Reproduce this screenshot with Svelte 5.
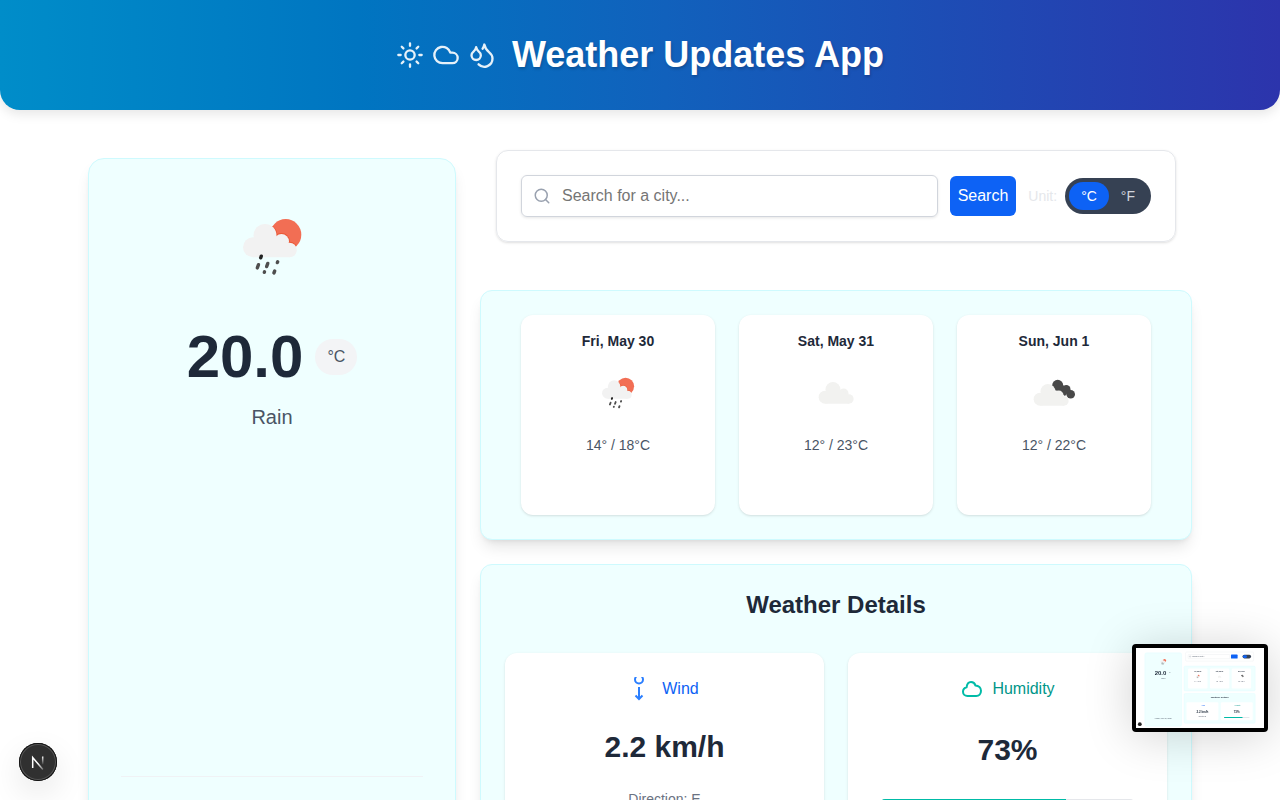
<script>
  let unit = $state('C');
  let city = $state('');
  const humidity = 73;
  const days = [
    { date: 'Fri, May 30', low: 14, high: 18, icon: 'rain' },
    { date: 'Sat, May 31', low: 12, high: 23, icon: 'cloud' },
    { date: 'Sun, Jun 1', low: 12, high: 22, icon: 'broken' }
  ];
</script>

{#snippet cloudShape()}
  <circle cx="11" cy="30.3" r="10" />
  <circle cx="23" cy="18.5" r="11.5" />
  <circle cx="39.5" cy="24.5" r="7.5" />
  <circle cx="47.5" cy="33" r="7.3" />
  <path d="M11 22h28l8.500 5v13.300H11z" />
{/snippet}

{#snippet rainArt()}
  <circle cx="43.700" cy="17.700" r="15.600" fill="#f26e54" />
  <g fill="#ea5836">
    <circle cx="23" cy="18.500" r="12.300" clip-path="url(#sun-disc)" />
    <circle cx="39.500" cy="24.500" r="8.500" />
    <circle cx="47.500" cy="33" r="8.300" clip-path="url(#sun-disc)" />
  </g>
  <g fill="#f2f2f2">{@render cloudShape()}</g>
  <g stroke="#4e4e4e" stroke-width="3.400" stroke-linecap="round">
    <path d="M19.300 39.200l-.6 1.600" stroke="#222" />
    <path d="M16.500 47.700l-1.200 3.200M25.800 46.400l-1.200 3.200M22.500 54.800l-.2.500M32.700 54l-.8 2M35.700 44.700l-.4.900" />
  </g>
{/snippet}

{#snippet thumbText(x, y, size, text, weight = 400, fill = '#4a5565')}
  <text {x} {y} font-size={size} font-weight={weight} {fill} text-anchor="middle">{text}</text>
{/snippet}

<header class="hero">
  <div class="hero-icons" aria-hidden="true">
    <svg class="line-icon" viewBox="0 0 24 24"><circle cx="12" cy="12" r="4" /><path d="M12 2v2M12 20v2M4.930 4.930l1.410 1.410M17.660 17.660l1.410 1.410M2 12h2M20 12h2M6.340 17.660l-1.410 1.410M19.070 4.930l-1.410 1.410" /></svg>
    <svg class="line-icon" viewBox="0 0 24 24"><path d="M17.500 19H9a7 7 0 1 1 6.710-9h1.790a4.500 4.500 0 1 1 0 9Z" /></svg>
    <svg class="line-icon" viewBox="0 0 24 24"><path d="M7 16.300c2.200 0 4-1.830 4-4.050 0-1.160-.570-2.260-1.710-3.190S7.290 6.750 7 5.300c-.290 1.450-1.140 2.840-2.290 3.760S3 11.100 3 12.250c0 2.220 1.800 4.050 4 4.050z" /><path d="M12.560 6.600A10.970 10.970 0 0 0 14 3.020c.500 2.500 2 4.900 4 6.500s3 3.500 3 5.500a6.980 6.980 0 0 1-11.910 4.970" /></svg>
  </div>
  <h1>Weather Updates App</h1>
</header>

<main>
  <section class="panel current" aria-label="Current weather">
    <svg class="current-icon" viewBox="0 0 60 60" aria-hidden="true">
      <defs><clipPath id="sun-disc"><circle cx="43.700" cy="17.700" r="15.600" /></clipPath></defs>
      {@render rainArt()}
    </svg>
    <div class="reading">
      <span class="temp">20.0</span>
      <span class="badge">°{unit}</span>
    </div>
    <p class="condition">Rain</p>
    <footer>Friday, May 30, 2025</footer>
  </section>

  <div class="column">
    <form class="search" onsubmit={(e) => e.preventDefault()}>
      <div class="field">
        <svg viewBox="0 0 24 24" aria-hidden="true"><circle cx="11" cy="11" r="8" /><path d="m21 21-4.300-4.300" /></svg>
        <input type="text" aria-label="City" placeholder="Search for a city..." bind:value={city} />
      </div>
      <button class="submit" type="submit">Search</button>
      <div class="units" role="group" aria-labelledby="unit-label">
        <span id="unit-label">Unit:</span>
        <div class="toggle">
          {#each ['C', 'F'] as u}
            <button type="button" class:active={unit === u} aria-pressed={unit === u} onclick={() => (unit = u)}>°{u}</button>
          {/each}
        </div>
      </div>
    </form>

    <section class="panel forecast" aria-label="Forecast">
      {#each days as day}
        <article class="card day">
          <h3>{day.date}</h3>
          <svg viewBox="0 0 60 60" aria-hidden="true">
            {#if day.icon === 'rain'}
              <g transform="translate(13.500 13.500) scale(.55)">{@render rainArt()}</g>
            {:else if day.icon === 'cloud'}
              <g transform="translate(12 14.500) scale(.65)" fill="#f2f2f0">{@render cloudShape()}</g>
            {:else}
              <g fill="#484848"><circle cx="33.700" cy="22.300" r="5.500" /><circle cx="42.300" cy="26.300" r="4.200" /><circle cx="46.700" cy="31.300" r="4.300" /><path d="M31 26l6-6 8 8-4 5z" /></g>
              <g transform="translate(9 16.500) scale(.65)" fill="#f2f2f0">{@render cloudShape()}</g>
            {/if}
          </svg>
          <p>{day.low}° / {day.high}°C</p>
        </article>
      {/each}
    </section>

    <section class="panel details">
      <h2>Weather Details</h2>
      <div class="metrics">
        <article class="card metric wind">
          <h3>
            <svg viewBox="0 0 24 24" aria-hidden="true"><circle cx="9" cy="2.500" r="4" /><path d="M9 10v11.500M5.500 18.500 9 22l3.500-3.500" /></svg>
            Wind
          </h3>
          <strong>2.2 km/h</strong>
          <p>Direction: E</p>
        </article>
        <article class="card metric humidity">
          <h3>
            <svg viewBox="0 0 24 24" aria-hidden="true"><path d="M6.600 10.200C7 7 8.800 5 11 5c2.200 0 3.800 1.300 4.400 3.400C18.600 8.600 21 10.800 21 13.800S19 19 16.200 19H7.500C5 19 3 17.200 3 14.700s1.500-4 3.600-4.500Z" /></svg>
            Humidity
          </h3>
          <strong>{humidity}%</strong>
          <div class="track"><div class="fill" style="width: {humidity}%"></div></div>
        </article>
      </div>
    </section>
  </div>
</main>

<aside class="preview" aria-hidden="true">
  <svg viewBox="0 0 1280 800">
    <rect width="1280" height="800" fill="#fff" />
    <g fill="#efffff" stroke="#cefafe" stroke-width="2">
      <rect x="88" y="48" width="368" height="734" rx="16" />
      <rect x="480" y="180" width="712" height="250" rx="12" />
      <rect x="480" y="455" width="712" height="298" rx="12" />
    </g>
    <rect x="496" y="40" width="680" height="92" rx="12" fill="#fff" stroke="#e5e7eb" stroke-width="3" />
    <rect x="521" y="65" width="417" height="42" rx="6" fill="#fff" stroke="#d1d5dc" stroke-width="2" />
    <circle cx="541" cy="85" r="7" fill="none" stroke="#99a1af" stroke-width="3" />
    <rect x="950" y="66" width="66" height="40" rx="6" fill="#0d62f5" />
    <rect x="1065" y="68" width="86" height="36" rx="18" fill="#364153" />
    <rect x="1069" y="72" width="40" height="28" rx="14" fill="#0d62f5" />
    <g fill="#fff">
      <rect x="521" y="205" width="194" height="200" rx="12" />
      <rect x="739" y="205" width="194" height="200" rx="12" />
      <rect x="957" y="205" width="194" height="200" rx="12" />
      <rect x="505" y="543" width="319" height="180" rx="12" />
      <rect x="848" y="543" width="319" height="180" rx="12" />
    </g>
    <g transform="translate(242 107)">{@render rainArt()}</g>
    <g transform="translate(602 267) scale(.55)">{@render rainArt()}</g>
    <g transform="translate(818 270) scale(.65)" fill="#f2f2f0">{@render cloudShape()}</g>
    <path d="M1052 276l10-6 14 12-8 6z" fill="#484848" stroke="#484848" stroke-width="4" />
    {@render thumbText(245, 267, 60, '20.0', 700, '#1e2939')}
    {@render thumbText(336, 252, 16, '°C')}
    {@render thumbText(272, 314, 20, 'Rain')}
    {@render thumbText(272, 708, 18, 'Friday, May 30, 2025')}
    {@render thumbText(625, 91, 16, 'Search for a city...')}
    {#each days as day, i}
      {@render thumbText(618 + i * 218, 236, 14, day.date, 700, '#1e2939')}
      {@render thumbText(618 + i * 218, 340, 14, `${day.low}° / ${day.high}°C`)}
    {/each}
    {@render thumbText(836, 503, 24, 'Weather Details', 700, '#1e2939')}
    {@render thumbText(672, 584, 16, 'Wind', 400, '#0d62f5')}
    {@render thumbText(1015, 584, 16, 'Humidity', 400, '#009689')}
    {@render thumbText(664, 648, 30, '2.2 km/h', 700, '#1e2939')}
    {@render thumbText(1007, 651, 30, '73%', 700, '#1e2939')}
    {@render thumbText(664, 694, 14, 'Direction: E')}
    <rect x="880" y="689" width="255" height="10" rx="5" fill="#e5e7eb" />
    <rect x="880" y="689" width="186" height="10" rx="5" fill="#00bba7" />
    <circle cx="38" cy="762" r="19" fill="#222" />
  </svg>
</aside>

<button class="dev" type="button" aria-label="Open Next.js Dev Tools">
  <svg viewBox="0 0 38 38" aria-hidden="true">
    <defs>
      <linearGradient id="n-diagonal" x1="20" y1="20" x2="25" y2="27" gradientUnits="userSpaceOnUse"><stop stop-color="#fff" /><stop offset="1" stop-color="#fff" stop-opacity=".2" /></linearGradient>
      <linearGradient id="n-stem" x1="24" y1="13" x2="24" y2="22" gradientUnits="userSpaceOnUse"><stop stop-color="#fff" /><stop offset="1" stop-color="#fff" stop-opacity="0" /></linearGradient>
    </defs>
    <path d="M13.700 25V14.500l10.200 12" fill="none" stroke="url(#n-diagonal)" stroke-width="1.500" />
    <path d="M23.700 13.500v8" fill="none" stroke="url(#n-stem)" stroke-width="1.500" />
  </svg>
</button>

<style>
  :global(body) {
    background: #fff;
    color: #1e2939;
    font-family: 'Liberation Sans', Arial, sans-serif;
    font-size: 16px;
    line-height: 24px;
  }
  :global(*) { box-sizing: border-box; }
  h1, h2, h3, p { margin: 0; }
  button, input { font: inherit; }
  button { border: 0; cursor: pointer; }

  .hero {
    display: flex;
    align-items: center;
    justify-content: center;
    gap: 16px;
    padding: 35px 24px;
    border-radius: 0 0 20px 20px;
    background: linear-gradient(90deg, #008dc9, #0075c1 28%, #1161bc 52%, #2c34ac);
    box-shadow: 0 4px 12px rgba(0, 0, 0, 0.1);
    color: #fff;
  }
  .hero-icons { display: flex; gap: 8px; }
  .line-icon {
    width: 28px;
    height: 28px;
    fill: none;
    stroke: #fff;
    stroke-opacity: 0.9;
    stroke-width: 2;
    stroke-linecap: round;
    stroke-linejoin: round;
  }
  h1 {
    font-size: 36px;
    line-height: 40px;
    text-shadow: 1px 2px 3px rgba(0, 0, 0, 0.2);
  }

  main {
    display: flex;
    gap: 24px;
    max-width: 1152px;
    min-height: 100vh;
    margin: 0 auto;
    padding: 40px 24px 18px;
  }
  .panel {
    border: 1px solid #cefafe;
    border-radius: 12px;
    background: #efffff;
    box-shadow: 0 10px 15px -3px rgba(0, 0, 0, 0.1), 0 4px 6px -4px rgba(0, 0, 0, 0.1);
  }
  .current {
    display: flex;
    flex: 0 0 33.333%;
    flex-direction: column;
    align-items: center;
    margin-top: 8px;
    padding: 32px;
    border-radius: 16px;
  }
  .current-icon { width: 60px; height: 60px; margin: 26px 0; }
  .reading {
    display: flex;
    align-items: center;
    gap: 12px;
    margin-top: 24px;
  }
  .temp { font-size: 60px; line-height: 60px; font-weight: 700; }
  .badge {
    padding: 6px 12px;
    border-radius: 18px;
    background: #f3f4f6;
    color: #4a5565;
  }
  .condition { margin-top: 16px; font-size: 20px; line-height: 28px; color: #4a5565; }
  footer {
    align-self: stretch;
    margin-top: auto;
    padding: 28px 0 30px;
    border-top: 1px solid #f0f2f5;
    text-align: center;
    color: #4a5565;
  }

  .column {
    display: flex;
    flex: 1;
    flex-direction: column;
    gap: 24px;
    min-width: 0;
  }
  .search {
    display: flex;
    align-items: center;
    gap: 12px;
    margin: 0 16px 24px;
    padding: 24px;
    border: 1px solid #e5e7eb;
    border-radius: 12px;
    box-shadow: 0 1px 3px rgba(0, 0, 0, 0.1), 0 1px 2px -1px rgba(0, 0, 0, 0.1);
  }
  .field {
    display: flex;
    flex: 1;
    align-items: center;
    gap: 11px;
    min-width: 0;
    padding: 8px 11px;
    border: 1px solid #d1d5dc;
    border-radius: 6px;
    box-shadow: 0 1px 3px rgba(0, 0, 0, 0.1);
  }
  .field svg {
    flex: none;
    width: 18px;
    height: 18px;
    fill: none;
    stroke: #99a1af;
    stroke-width: 2;
    stroke-linecap: round;
  }
  .field input {
    flex: 1;
    min-width: 0;
    height: 24px;
    padding: 0;
    border: 0;
    outline: 0;
    background: none;
  }
  .field input::placeholder { color: #757575; opacity: 1; }
  .submit {
    padding: 8px;
    border-radius: 6px;
    background: #0d62f5;
    color: #fff;
  }
  .units {
    display: flex;
    align-items: center;
    gap: 8px;
    font-size: 14px;
    line-height: 20px;
    color: #e5e7eb;
  }
  .toggle {
    display: flex;
    padding: 4px;
    border-radius: 18px;
    background: #364153;
  }
  .toggle button {
    padding: 4px 12px;
    border-radius: 14px;
    background: none;
    color: #d1d5dc;
  }
  .toggle .active { background: #0d62f5; color: #fff; }

  .card {
    border-radius: 12px;
    background: #fff;
    box-shadow: 0 1px 3px rgba(0, 0, 0, 0.1), 0 1px 2px -1px rgba(0, 0, 0, 0.1);
  }
  .forecast {
    display: grid;
    grid-template-columns: repeat(3, 1fr);
    gap: 24px;
    padding: 24px 40px;
  }
  .day {
    display: flex;
    flex-direction: column;
    align-items: center;
    padding: 16px 16px 60px;
    font-size: 14px;
    line-height: 20px;
  }
  .day h3 { font-size: 14px; }
  .day svg { width: 60px; height: 60px; margin: 12px 0; }
  .day p { color: #4a5565; }

  .details { padding: 24px; }
  .details h2 {
    margin-bottom: 32px;
    font-size: 24px;
    line-height: 32px;
    text-align: center;
  }
  .metrics {
    display: grid;
    grid-template-columns: 1fr 1fr;
    gap: 24px;
  }
  .metric {
    display: flex;
    flex-direction: column;
    align-items: center;
    justify-content: space-between;
    min-height: 180px;
    padding: 24px;
  }
  .metric h3 {
    display: flex;
    align-items: center;
    gap: 8px;
    font-size: 16px;
    font-weight: 400;
  }
  .metric h3 svg {
    width: 24px;
    height: 24px;
    fill: none;
    stroke-width: 2;
  }
  .metric strong { font-size: 30px; line-height: 36px; }
  .wind strong { line-height: 40px; }
  .metric p { font-size: 14px; line-height: 20px; color: #6a7282; }
  .wind { justify-content: flex-start; }
  .wind strong { margin: 26px 0 22px; }
  .wind h3 { color: #0d62f5; }
  .wind svg { stroke: #2b7fff; }
  .humidity h3 { color: #009689; }
  .humidity svg { stroke: #00bba7; }
  .track {
    align-self: stretch;
    height: 10px;
    margin: 0 8px;
    overflow: hidden;
    border-radius: 5px;
    background: #e5e7eb;
  }
  .fill { height: 100%; background: #00bba7; }

  .preview {
    position: fixed;
    right: 12px;
    bottom: 68px;
    width: 136px;
    border: 4px solid #000;
    border-radius: 4px;
    box-shadow: 0 4px 48px rgba(0, 0, 0, 0.18);
  }
  .preview svg { display: block; width: 100%; }
  .dev {
    position: fixed;
    left: 19px;
    bottom: 19px;
    width: 38px;
    height: 38px;
    padding: 0;
    border-radius: 50%;
    background: #303030;
    box-shadow: inset 0 0 0 1px #111, inset 0 0 0 2px #555, 0 12px 32px rgba(0, 0, 0, 0.1);
  }
  .dev svg { display: block; width: 38px; height: 38px; }
</style>
